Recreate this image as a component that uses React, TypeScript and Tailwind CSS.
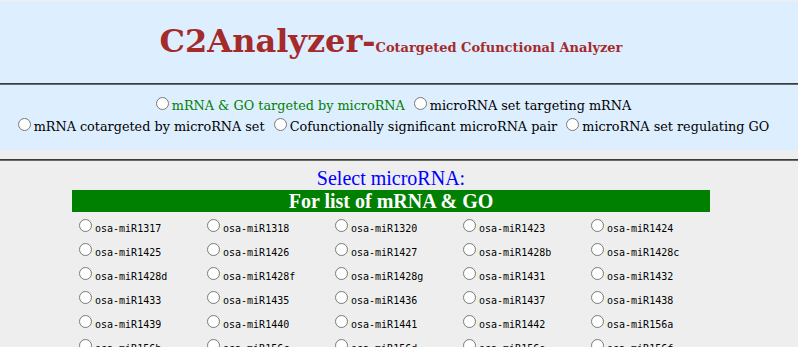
import React from 'react';

const mirnas = [
  'osa-miR1317', 'osa-miR1318', 'osa-miR1320', 'osa-miR1423', 'osa-miR1424',
  'osa-miR1425', 'osa-miR1426', 'osa-miR1427', 'osa-miR1428b', 'osa-miR1428c',
  'osa-miR1428d', 'osa-miR1428f', 'osa-miR1428g', 'osa-miR1431', 'osa-miR1432',
  'osa-miR1433', 'osa-miR1435', 'osa-miR1436', 'osa-miR1437', 'osa-miR1438',
  'osa-miR1439', 'osa-miR1440', 'osa-miR1441', 'osa-miR1442', 'osa-miR156a',
  'osa-miR156b', 'osa-miR156c', 'osa-miR156d', 'osa-miR156e', 'osa-miR156f',
];

function Radio({ name }: { name: string }) {
  return <input type="radio" name={name} className="ml-[5px] mr-[3px] mt-[3px] align-baseline" />;
}

function Hr() {
  return (
    <div className="w-full">
      <div className="h-px bg-[#3c3c3c]" />
      <div className="h-px bg-[#6a6a6a]" />
    </div>
  );
}

export default function App() {
  return (
    <div className="h-[347px] overflow-hidden bg-[#eeeeee] pt-px font-['DejaVu_Serif',serif]">
      {/* header + analysis choices */}
      <div className="bg-[#ddeeff]">
        <div className="w-[782px] h-[82px] pt-[22px] text-center">
          <h1 className="text-[32px] leading-[37px] font-bold text-[#a52a2a]">
            C2Analyzer-<span className="text-[13px]">Cotargeted Cofunctional Analyzer</span>
          </h1>
        </div>
        <Hr />
        <div className="w-[782px] pt-[9px] pb-[15px] text-center text-[12.8px] leading-[19px] text-black">
          <div>
            <Radio name="mode" />
            <span className="text-[#008000]">mRNA &amp; GO targeted by microRNA</span>{' '}
            <Radio name="mode" />microRNA set targeting mRNA
          </div>
          <div>
            <Radio name="mode" />mRNA cotargeted by microRNA set{' '}
            <Radio name="mode" />Cofunctionally significant microRNA pair{' '}
            <Radio name="mode" />microRNA set regulating GO
          </div>
        </div>
      </div>

      <div className="h-[8px]" />
      <Hr />

      {/* microRNA selection */}
      <div className="w-[782px]">
        <div className="mt-[6px] text-center font-['Liberation_Serif',serif] text-[20px] leading-[23px] text-[#0000ff]">
          Select microRNA:
        </div>
        <div className="w-[638px] h-[22px] mx-auto bg-[#008000] text-center font-['Liberation_Serif',serif] font-bold text-[20px] leading-[22px] text-white">
          For list of mRNA &amp; GO
        </div>
        <div className="ml-[74px] mt-[4px] grid grid-cols-[repeat(5,128px)] font-['DejaVu_Sans_Mono',monospace] text-[10px] text-black">
          {mirnas.map((m) => (
            <div key={m} className="h-6 whitespace-nowrap">
              <Radio name="mirna" />{m}
            </div>
          ))}
        </div>
      </div>
    </div>
  );
}
